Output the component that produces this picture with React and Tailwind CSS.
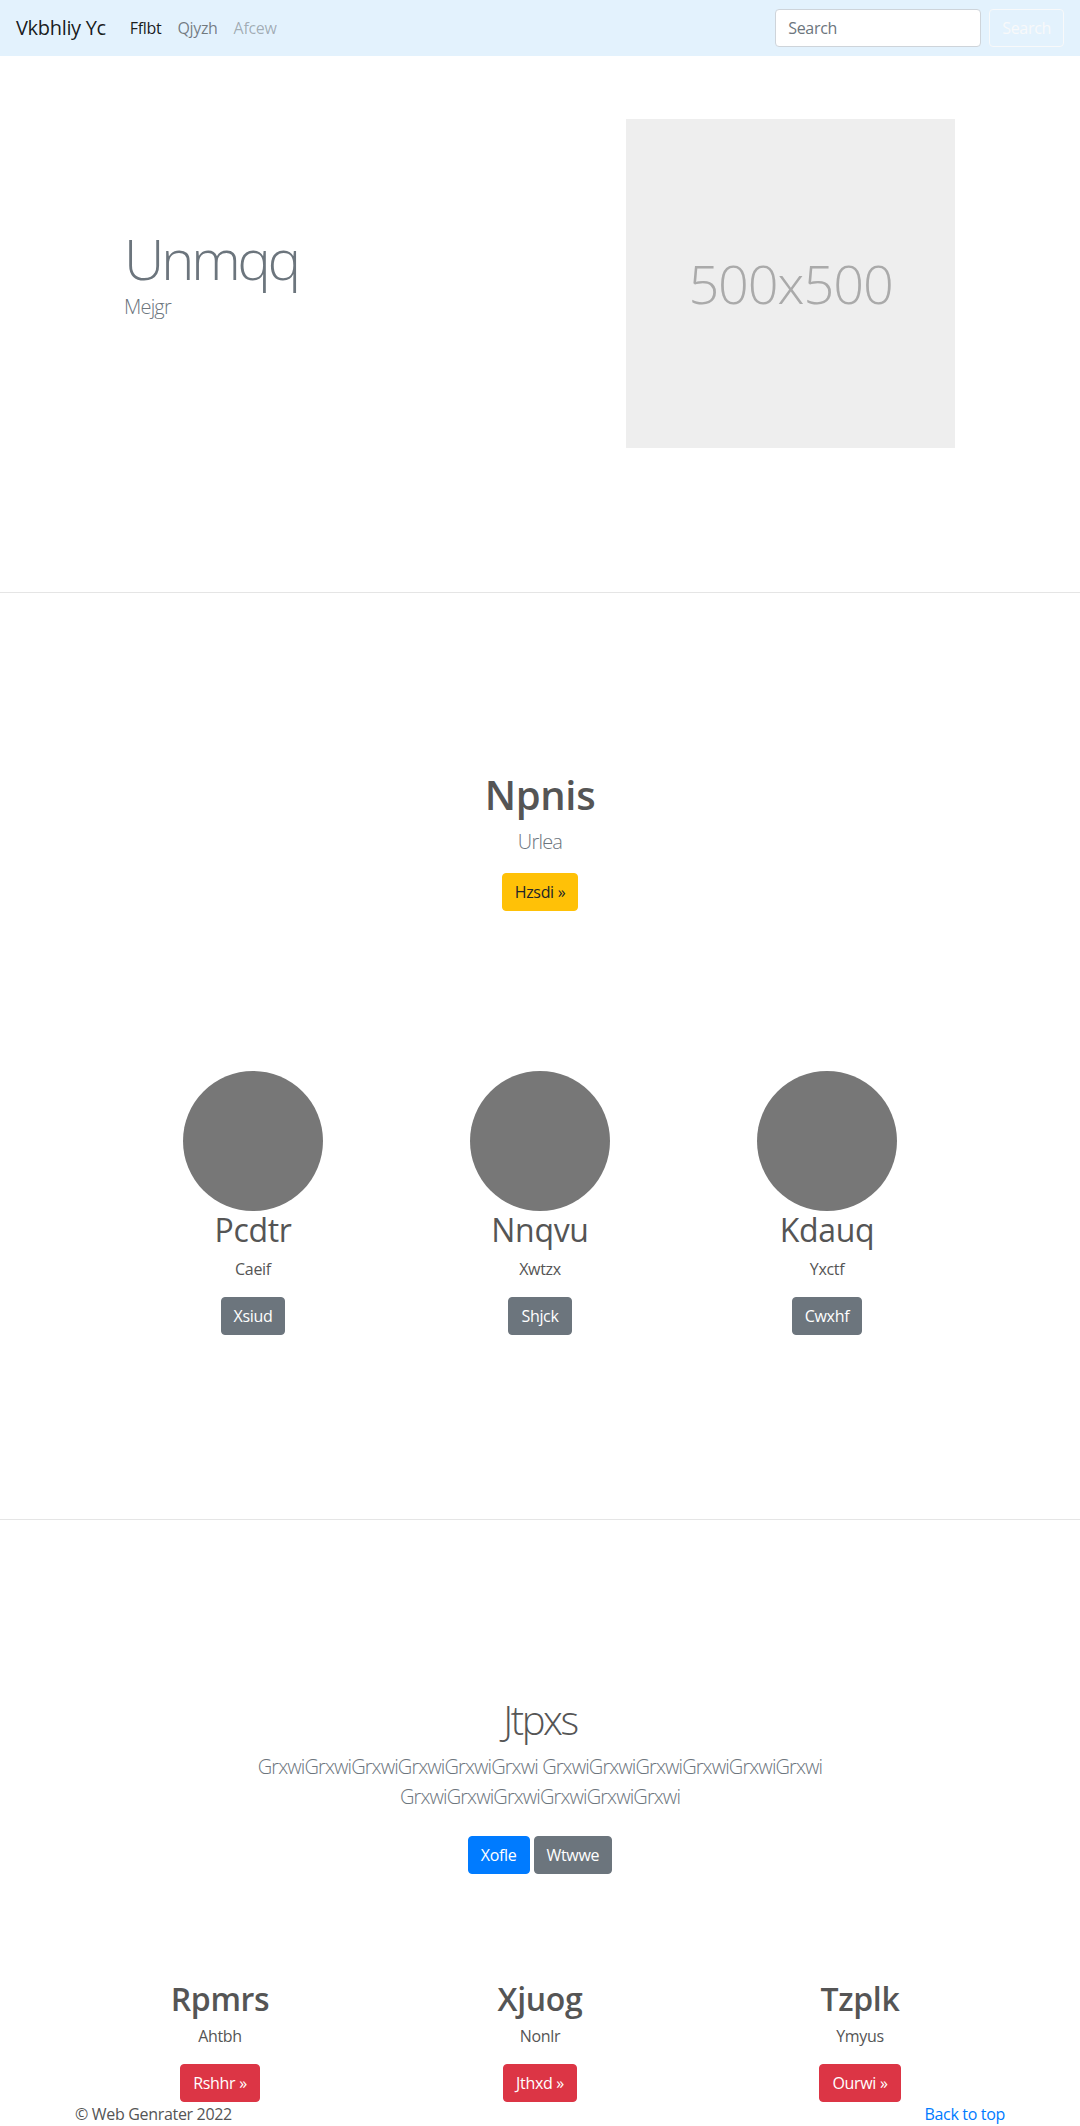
import React from 'react';

const font = { fontFamily: '"Open Sans", "Noto Sans", sans-serif' };

const Btn = ({ children, className }) => (
  <a
    href="#"
    className={`inline-block px-3 py-[6px] text-base leading-6 border rounded ${className}`}
  >
    {children}
  </a>
);

const Navbar = () => (
  <nav className="h-14 bg-[#e3f2fd] px-4 flex items-center">
    <a href="#" className="text-xl text-[rgba(0,0,0,0.9)] mr-4 leading-[30px]">
      Vkbhliy Yc
    </a>
    <div className="flex text-base">
      <a href="#" className="px-2 text-[rgba(0,0,0,0.9)]">Fflbt</a>
      <a href="#" className="px-2 text-[rgba(0,0,0,0.5)]">Qjyzh</a>
      <span className="px-2 text-[rgba(0,0,0,0.3)]">Afcew</span>
    </div>
    <form className="ml-auto flex items-center">
      <input
        placeholder="Search"
        className="w-[206px] h-[38px] px-3 bg-white border border-[#ced4da] rounded text-base placeholder:text-[#6c757d] outline-none"
      />
      <button
        type="button"
        className="ml-2 h-[38px] px-3 border border-[#f8f9fa] rounded text-[#f8f9fa] text-base"
      >
        Search
      </button>
    </form>
  </nav>
);

const Hero = () => (
  <section className="pt-[63px] pb-[144px] border-b border-[#e5e5e5] flex items-center">
    <div className="flex-1 pl-[124px] pb-[20px]">
      <h1 className="text-[56px] font-light leading-[1.2] tracking-[-0.055em] text-[#6c757d]">Unmqq</h1>
      <p className="text-xl font-light leading-[30px] tracking-[-0.04em] text-[#6c757d]">Mejgr</p>
    </div>
    <div className="w-[329px] h-[329px] mr-[125px] bg-[#eeeeee] flex items-center justify-center">
      <span className="text-[54px] font-light tracking-[-0.02em] text-[#aaaaaa]">500x500</span>
    </div>
  </section>
);

const people = [
  { name: 'Pcdtr', sub: 'Caeif', btn: 'Xsiud' },
  { name: 'Nnqvu', sub: 'Xwtzx', btn: 'Shjck' },
  { name: 'Kdauq', sub: 'Yxctf', btn: 'Cwxhf' },
];

const Feature = () => (
  <section className="pt-[178px] pb-[184px] border-b border-[#e5e5e5] text-center">
    <h1 className="text-[40px] font-semibold leading-[1.2] text-[#555] mb-2">Npnis</h1>
    <p className="text-xl font-light leading-[30px] tracking-[-0.04em] text-[#6c757d] mb-4">Urlea</p>
    <Btn className="bg-[#ffc107] border-[#ffc107] text-[#212529]">Hzsdi »</Btn>

    <div className="w-[861px] mx-auto grid grid-cols-3 mt-[160px]">
      {people.map((p) => (
        <div key={p.name} className="flex flex-col items-center">
          <div className="w-[140px] h-[140px] rounded-full bg-[#777777]" />
          <h2 className="text-[32px] leading-[1.2] text-[#555] mb-2">{p.name}</h2>
          <p className="text-base leading-6 text-[#555] mb-4">{p.sub}</p>
          <Btn className="bg-[#6c757d] border-[#6c757d] text-white">{p.btn}</Btn>
        </div>
      ))}
    </div>
  </section>
);

const word = 'GrxwiGrxwiGrxwiGrxwiGrxwiGrxwi';

const cols = [
  { name: 'Rpmrs', sub: 'Ahtbh', btn: 'Rshhr »' },
  { name: 'Xjuog', sub: 'Nonlr', btn: 'Jthxd »' },
  { name: 'Tzplk', sub: 'Ymyus', btn: 'Ourwi »' },
];

const Album = () => (
  <section className="pt-[176px] text-center">
    <div className="w-[610px] mx-auto">
      <h1 className="text-[40px] font-light leading-[1.2] tracking-[-0.06em] text-[#555] mb-2">Jtpxs</h1>
      <p className="text-xl font-light leading-[30px] tracking-[-0.045em] text-[#6c757d] mb-4">
        {word} {word} {word}
      </p>
      <p className="flex justify-center gap-1">
        <Btn className="my-2 bg-[#007bff] border-[#007bff] text-white">Xofle</Btn>
        <Btn className="my-2 bg-[#6c757d] border-[#6c757d] text-white">Wtwwe</Btn>
      </p>
    </div>

    <div className="w-[960px] mx-auto grid grid-cols-3 mt-[98px]">
      {cols.map((c) => (
        <div key={c.name} className="px-[15px]">
          <h2 className="text-[32px] font-semibold leading-[1.2] text-[#555] mb-[5px]">{c.name}</h2>
          <p className="text-base leading-6 text-[#555] mb-4">{c.sub}</p>
          <Btn className="bg-[#dc3545] border-[#dc3545] text-white">{c.btn}</Btn>
        </div>
      ))}
    </div>
  </section>
);

const Footer = () => (
  <footer className="w-[930px] mx-auto flex justify-between text-base leading-6 text-[#555]">
    <p>© Web Genrater 2022</p>
    <a href="#" className="text-[#007bff]">Back to top</a>
  </footer>
);

export default function App() {
  return (
    <div className="bg-white min-h-[2126px] tracking-[-0.02em]" style={font}>
      <Navbar />
      <Hero />
      <Feature />
      <Album />
      <Footer />
    </div>
  );
}
